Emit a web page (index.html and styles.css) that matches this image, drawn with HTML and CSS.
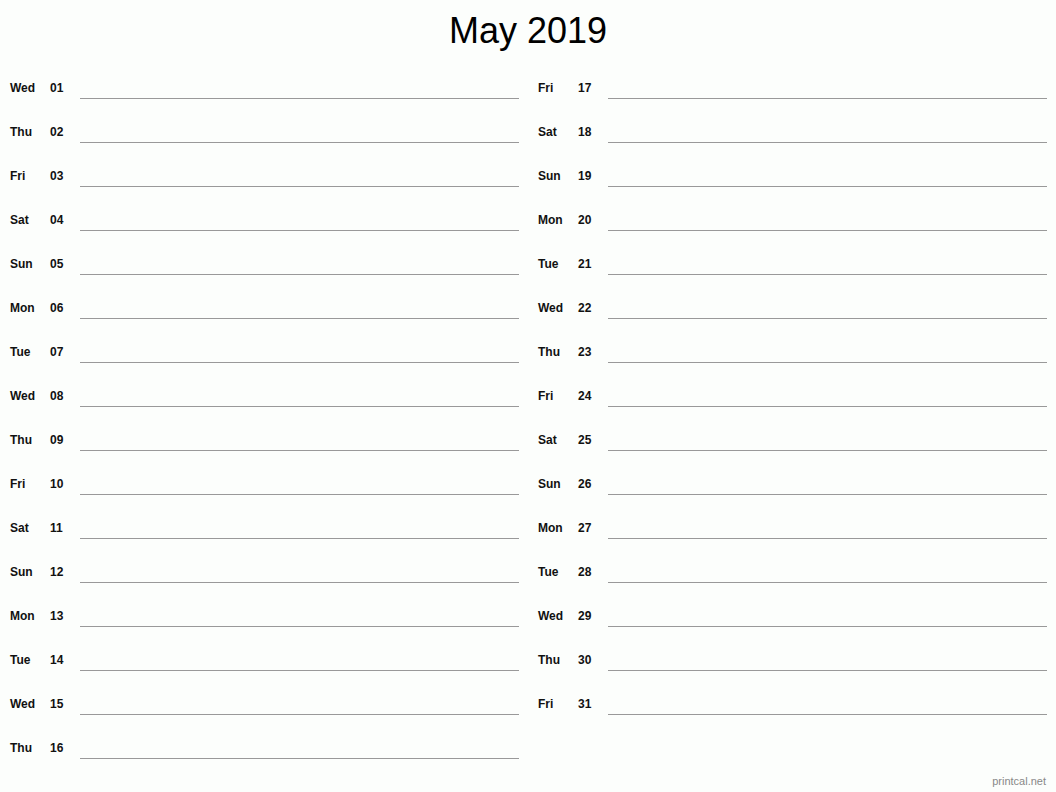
FILE: index.html
```html
<!DOCTYPE html>
<html>
<head>
<meta charset="utf-8">
<link rel="stylesheet" href="styles.css">
</head>
<body>
<div class="page">
  <h1 class="title">May 2019</h1>
  <div class="cols">
    <div class="col">
      <div class="row"><span class="day">Wed</span><span class="num">01</span><span class="line"></span></div>
      <div class="row"><span class="day">Thu</span><span class="num">02</span><span class="line"></span></div>
      <div class="row"><span class="day">Fri</span><span class="num">03</span><span class="line"></span></div>
      <div class="row"><span class="day">Sat</span><span class="num">04</span><span class="line"></span></div>
      <div class="row"><span class="day">Sun</span><span class="num">05</span><span class="line"></span></div>
      <div class="row"><span class="day">Mon</span><span class="num">06</span><span class="line"></span></div>
      <div class="row"><span class="day">Tue</span><span class="num">07</span><span class="line"></span></div>
      <div class="row"><span class="day">Wed</span><span class="num">08</span><span class="line"></span></div>
      <div class="row"><span class="day">Thu</span><span class="num">09</span><span class="line"></span></div>
      <div class="row"><span class="day">Fri</span><span class="num">10</span><span class="line"></span></div>
      <div class="row"><span class="day">Sat</span><span class="num">11</span><span class="line"></span></div>
      <div class="row"><span class="day">Sun</span><span class="num">12</span><span class="line"></span></div>
      <div class="row"><span class="day">Mon</span><span class="num">13</span><span class="line"></span></div>
      <div class="row"><span class="day">Tue</span><span class="num">14</span><span class="line"></span></div>
      <div class="row"><span class="day">Wed</span><span class="num">15</span><span class="line"></span></div>
      <div class="row"><span class="day">Thu</span><span class="num">16</span><span class="line"></span></div>
    </div>
    <div class="col">
      <div class="row"><span class="day">Fri</span><span class="num">17</span><span class="line"></span></div>
      <div class="row"><span class="day">Sat</span><span class="num">18</span><span class="line"></span></div>
      <div class="row"><span class="day">Sun</span><span class="num">19</span><span class="line"></span></div>
      <div class="row"><span class="day">Mon</span><span class="num">20</span><span class="line"></span></div>
      <div class="row"><span class="day">Tue</span><span class="num">21</span><span class="line"></span></div>
      <div class="row"><span class="day">Wed</span><span class="num">22</span><span class="line"></span></div>
      <div class="row"><span class="day">Thu</span><span class="num">23</span><span class="line"></span></div>
      <div class="row"><span class="day">Fri</span><span class="num">24</span><span class="line"></span></div>
      <div class="row"><span class="day">Sat</span><span class="num">25</span><span class="line"></span></div>
      <div class="row"><span class="day">Sun</span><span class="num">26</span><span class="line"></span></div>
      <div class="row"><span class="day">Mon</span><span class="num">27</span><span class="line"></span></div>
      <div class="row"><span class="day">Tue</span><span class="num">28</span><span class="line"></span></div>
      <div class="row"><span class="day">Wed</span><span class="num">29</span><span class="line"></span></div>
      <div class="row"><span class="day">Thu</span><span class="num">30</span><span class="line"></span></div>
      <div class="row"><span class="day">Fri</span><span class="num">31</span><span class="line"></span></div>
    </div>
  </div>
  <div class="footer">printcal.net</div>
</div>
</body>
</html>
```

FILE: styles.css
```css
html, body {
  margin: 0;
  padding: 0;
  background: #fcfefc;
}
body {
  font-family: "Liberation Sans", Arial, sans-serif;
  color: #111;
}
.page {
  width: 1056px;
  height: 792px;
  overflow: hidden;
}
.title {
  margin: 0 0 3px 0;
  padding-top: 9px;
  font-size: 36px;
  font-weight: normal;
  line-height: 43px;
  text-align: center;
  color: #000;
}
.cols {
  display: grid;
  grid-template-columns: 509px 509px;
  column-gap: 19px;
  padding: 0 9px 0 10px;
}
.row {
  display: grid;
  grid-template-columns: 40px 30px 1fr;
  align-items: end;
  height: 44px;
}
.day, .num {
  font-size: 12px;
  font-weight: bold;
  line-height: 14px;
  margin-bottom: 4px;
}
.line {
  height: 1px;
  background: #999;
}
.footer {
  margin-top: 16px;
  padding-right: 10px;
  text-align: right;
  font-size: 11px;
  line-height: 13px;
  color: #888;
}
```
